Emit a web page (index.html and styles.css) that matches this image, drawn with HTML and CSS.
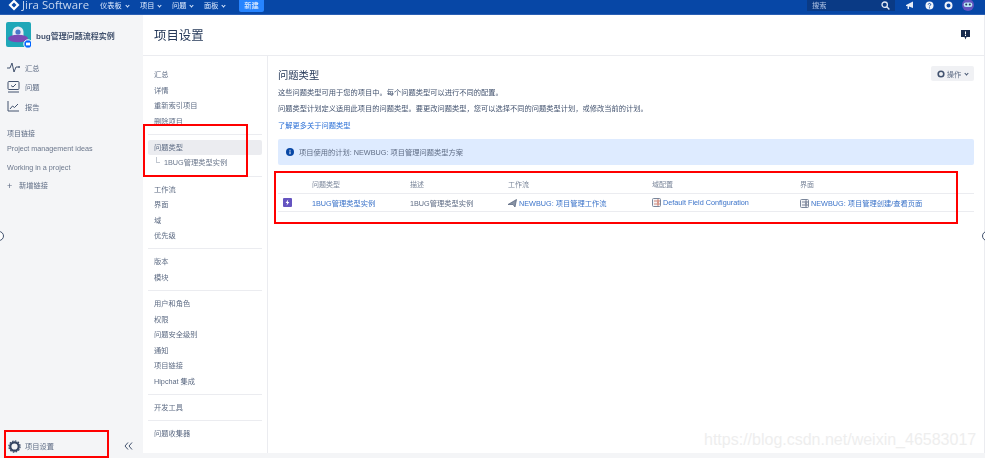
FILE: index.html
```html
<!DOCTYPE html>
<html lang="zh">
<head>
  <meta charset="UTF-8">
  <meta name="viewport" content="width=device-width, initial-scale=1.0">
  <title>项目设置</title>
  <link rel="stylesheet" href="styles.css">
</head>
<body>
  <header class="topbar">
    <div class="logo">
      <svg width="12" height="12" viewBox="0 0 12 12"><path d="M6 .5 11.5 6 6 11.5 .5 6Z" fill="#fff"/><path d="M6 3.5 8.5 6 6 8.5 3.5 6Z" fill="#0747a6"/></svg>
      <span>Jira Software</span>
    </div>
    <nav class="topnav">
      <a class="topitem">仪表板 <i class="caret"></i></a>
      <a class="topitem">项目 <i class="caret"></i></a>
      <a class="topitem">问题 <i class="caret"></i></a>
      <a class="topitem">面板 <i class="caret"></i></a>
      <a class="create">新建</a>
    </nav>
    <div class="topright">
      <div class="search">
        <span>搜索</span>
        <svg width="9" height="9" viewBox="0 0 9 9"><circle cx="3.7" cy="3.7" r="2.7" fill="none" stroke="#dfe7f5" stroke-width="1.3"/><path d="M5.8 5.8 8.4 8.4" stroke="#dfe7f5" stroke-width="1.4"/></svg>
      </div>
      <svg class="ticon" width="9" height="9" viewBox="0 0 9 9"><path d="M0 4 7 .5V7L3 5.6 3 8H1.6V5.2L0 5Z" fill="#e6ecf7"/></svg>
      <svg class="ticon" width="9" height="9" viewBox="0 0 9 9"><circle cx="4.5" cy="4.5" r="4" fill="#f0f4fb"/><path d="M3.2 3.5C3.4 2 5.8 2.2 5.7 3.6 5.6 4.5 4.5 4.4 4.5 5.4" fill="none" stroke="#0747a6"/><circle cx="4.5" cy="6.8" r=".6" fill="#0747a6"/></svg>
      <svg class="ticon" width="9" height="9" viewBox="0 0 9 9"><circle cx="4.5" cy="4.5" r="3" fill="none" stroke="#f0f4fb" stroke-width="2"/></svg>
      <svg class="ticon" width="12" height="12" viewBox="0 0 12 12"><circle cx="6" cy="6" r="6" fill="#6554c0"/><rect x="1.6" y="3.4" width="8.8" height="4.6" rx="2.3" fill="#b9e6f5"/><circle cx="4.2" cy="5.6" r="1" fill="#253858"/><circle cx="7.8" cy="5.6" r="1" fill="#253858"/></svg>
    </div>
  </header>

  <div class="page">
    <aside class="sidebar">
      <div class="project">
        <div class="avatar">
          <svg width="25" height="26" viewBox="0 0 25 26">
            <rect width="25" height="25" rx="2" fill="#1fa7b8"/>
            <path d="M6.5 15V10a5.5 5.5 0 0 1 11 0v5Z" fill="#e6ebf4"/>
            <ellipse cx="12" cy="16.5" rx="10" ry="3.8" fill="#7a4bb5"/>
            <circle cx="12" cy="10" r="2.6" fill="#4a77c9"/>
            <circle cx="22" cy="22" r="4.2" fill="#0065ff" stroke="#fff"/>
            <rect x="20" y="20.6" width="4" height="2.8" fill="#fff"/>
          </svg>
        </div>
        <div class="project-name">bug管理问题流程实例</div>
      </div>
      <ul class="mainnav">
        <li><svg width="13" height="11" viewBox="0 0 13 11"><path d="M0 6H3L5 1 7 10 9 5H11" fill="none" stroke="#42526e" stroke-width="1"/><circle cx="12" cy="5" r="1" fill="#42526e"/></svg>汇总</li>
        <li><svg width="13" height="12" viewBox="0 0 13 12"><rect x="1" y=".5" width="11" height="8" rx="1" fill="none" stroke="#42526e"/><path d="M4 4.5 6 6 9 3" fill="none" stroke="#42526e"/><path d="M1 11H12" stroke="#42526e"/></svg>问题</li>
        <li><svg width="13" height="11" viewBox="0 0 13 11"><path d="M1 0V10H12" fill="none" stroke="#42526e"/><path d="M3 8 5.5 5 7.5 6.5 11 3" fill="none" stroke="#42526e"/></svg>报告</li>
      </ul>
      <h4 class="side-heading">项目链接</h4>
      <a class="side-link">Project management ideas</a>
      <a class="side-link">Working in a project</a>
      <a class="side-add"><span class="plus">+</span>新增链接</a>
      <div class="side-foot">
        <div class="side-settings">
          <svg width="13" height="13" viewBox="0 0 13 13"><circle cx="6.5" cy="6.5" r="4.2" fill="none" stroke="#344563" stroke-width="2.2"/><circle cx="6.5" cy="6.5" r="5.6" fill="none" stroke="#344563" stroke-width="1.2" stroke-dasharray="1.6 1.3"/></svg>
          项目设置
        </div>
        <svg width="9" height="8" viewBox="0 0 9 8"><path d="M4 .5 1 4 4 7.5M8 .5 5 4 8 7.5" fill="none" stroke="#42526e" stroke-width="1"/></svg>
      </div>
    </aside>

    <main class="main">
      <div class="pagehead">
        <h1>项目设置</h1>
        <svg width="9" height="10" viewBox="0 0 9 10"><path d="M0 0H9V7H5.5L4.5 9.5 3.5 7H0Z" fill="#172b4d"/><rect x="4" y="1.4" width="1" height="3" fill="#fff"/><rect x="4" y="5" width="1" height="1" fill="#fff"/></svg>
      </div>
      <div class="body">
        <nav class="settings">
          <ul class="group">
            <li>汇总</li>
            <li>详情</li>
            <li>重新索引项目</li>
            <li>删除项目</li>
          </ul>
          <ul class="group">
            <li class="selected">问题类型</li>
            <li class="sub">1BUG管理类型实例</li>
          </ul>
          <ul class="group">
            <li>工作流</li>
            <li>界面</li>
            <li>域</li>
            <li>优先级</li>
          </ul>
          <ul class="group">
            <li>版本</li>
            <li>模块</li>
          </ul>
          <ul class="group">
            <li>用户和角色</li>
            <li>权限</li>
            <li>问题安全级别</li>
            <li>通知</li>
            <li>项目链接</li>
            <li>Hipchat 集成</li>
          </ul>
          <ul class="group">
            <li>开发工具</li>
          </ul>
          <ul class="group">
            <li>问题收集器</li>
          </ul>
        </nav>

        <section class="content">
          <div class="content-head">
            <h2>问题类型</h2>
            <button class="actions">
              <svg width="8" height="8" viewBox="0 0 8 8"><circle cx="4" cy="4" r="2.8" fill="none" stroke="#42526e" stroke-width="1.6"/></svg>
              操作 <i class="caret dark"></i>
            </button>
          </div>
          <p class="line">这些问题类型可用于您的项目中。每个问题类型可以进行不同的配置。</p>
          <p class="line">问题类型计划定义适用此项目的问题类型。要更改问题类型，您可以选择不同的问题类型计划，或修改当前的计划。</p>
          <a class="more">了解更多关于问题类型</a>
          <div class="notice">
            <svg width="8" height="8" viewBox="0 0 8 8"><circle cx="4" cy="4" r="4" fill="#0747a6"/><rect x="3.5" y="3.4" width="1" height="2.8" fill="#fff"/><rect x="3.5" y="1.8" width="1" height="1" fill="#fff"/></svg>
            项目使用的计划: NEWBUG: 项目管理问题类型方案
          </div>
          <table class="types">
            <colgroup>
              <col class="c-icon"><col class="c-type"><col class="c-desc"><col class="c-flow"><col class="c-field"><col>
            </colgroup>
            <thead>
              <tr><th></th><th>问题类型</th><th>描述</th><th>工作流</th><th>域配置</th><th>界面</th></tr>
            </thead>
            <tbody>
              <tr>
                <td><svg class="ticon-type" width="9" height="9" viewBox="0 0 9 9"><rect width="9" height="9" rx="1" fill="#6554c0"/><path d="M5.2 1.5 2.6 5H4.2L3.6 7.5 6.4 4H4.8Z" fill="#fff"/></svg></td>
                <td><a>1BUG管理类型实例</a></td>
                <td>1BUG管理类型实例</td>
                <td><svg width="9" height="9" viewBox="0 0 9 9"><path d="M0 5.5 8.5 .5 7 8 5 5.5Z" fill="#8993a4" stroke="#505f79" stroke-width=".7"/></svg> <a>NEWBUG: 项目管理工作流</a></td>
                <td><svg width="9" height="9" viewBox="0 0 9 9"><rect x=".5" y=".5" width="8" height="8" rx="1" fill="#f4f5f7" stroke="#7a869a"/><path d="M2 3H4M2 6H4M5 2H7V4H5ZM5 5H7V7H5Z" fill="none" stroke="#c0563f" stroke-width=".7"/></svg> <a>Default Field Configuration</a></td>
                <td><svg width="9" height="9" viewBox="0 0 9 9"><rect x=".5" y=".5" width="8" height="8" rx="1" fill="#f4f5f7" stroke="#7a869a"/><path d="M2 3H4M2 6H4M5 2H7V4H5ZM5 5H7V7H5Z" fill="none" stroke="#42526e" stroke-width=".7"/></svg> <a>NEWBUG: 项目管理创建/查看页面</a></td>
              </tr>
            </tbody>
          </table>
        </section>
      </div>
    </main>
  </div>

  <span class="pager pager-left"></span>
  <span class="pager pager-right"></span>
  <span class="mark mark-types"></span>
  <span class="mark mark-table"></span>
  <span class="mark mark-settings"></span>
  <span class="watermark">https://blog.csdn.net/weixin_46583017</span>
</body>
</html>
```

FILE: styles.css
```css
* {
  margin: 0;
  padding: 0;
  box-sizing: border-box;
}

html, body {
  height: 458px;
  overflow: hidden;
}

body {
  font-family: "Liberation Sans", "Noto Sans CJK SC", sans-serif;
  font-size: 7.25px;
  color: #5e6c84;
  background: #fff;
  display: flex;
  flex-direction: column;
}

ul {
  list-style: none;
}

/* the screenshot is a soft upscale, so the page gets a slight blur too */
.topbar,
.page {
  filter: blur(0.3px);
}

.topbar {
  height: 15px;
  flex: none;
  background: #0747a6;
  border-bottom: 1px solid #2a5fb4;
  padding-bottom: 4px;
  display: flex;
  align-items: center;
  color: #deebff;
}

.logo {
  display: flex;
  align-items: center;
  gap: 2px;
  margin-left: 8px;
  width: 92px;
  font-family: "Open Sans", sans-serif;
  font-size: 11.4px;
  line-height: 10px;
  color: #c9d8f0;
  white-space: nowrap;
}

.topnav {
  display: flex;
  align-items: center;
  height: 10px;
}

.topitem {
  width: 32px;
  white-space: nowrap;
  font-size: 7.2px;
}

.topitem:first-child {
  width: 40px;
}

.caret {
  display: inline-block;
  width: 3px;
  height: 3px;
  margin: 0 0 1px 2px;
  border-right: 1px solid #deebff;
  border-bottom: 1px solid #deebff;
  transform: rotate(45deg);
}

.caret.dark {
  border-color: #42526e;
}

.create {
  margin-left: 3px;
  width: 25px;
  height: 12px;
  margin-top: 2px;
  background: #2684ff;
  border-radius: 0 0 2px 2px;
  color: #fff;
  text-align: center;
  line-height: 12px;
}

.topright {
  margin-left: auto;
  display: flex;
  align-items: center;
  height: 10px;
  padding-right: 11px;
}

.search {
  width: 88px;
  height: 12px;
  margin: 0 11px 0 0;
  padding: 0 5px;
  background: #0a3a85;
  display: flex;
  align-items: center;
  justify-content: space-between;
  color: #b3c6e6;
  flex: none;
}

.ticon {
  margin-right: 10px;
}

.ticon:last-child {
  margin: 0 0 0 -1px;
}

.page {
  flex: 1;
  display: flex;
  min-height: 0;
  background: #f4f5f7;
}

.sidebar {
  width: 143px;
  flex: none;
  background: #f4f5f7;
  display: flex;
  flex-direction: column;
  padding-top: 7px;
}

.project {
  display: flex;
  align-items: center;
  gap: 5px;
  padding-left: 6px;
}

.avatar {
  height: 26px;
}

.project-name {
  font-size: 8px;
  font-weight: bold;
  color: #42526e;
  white-space: nowrap;
}

.mainnav {
  margin-top: 10px;
}

.mainnav li {
  height: 19.5px;
  display: flex;
  align-items: center;
  gap: 5px;
  padding-left: 7px;
}

.side-heading {
  margin-top: 11px;
  padding-left: 7px;
  font-size: 7px;
  font-weight: normal;
  line-height: 12px;
}

.side-link {
  display: block;
  padding-left: 7px;
  margin-top: 7px;
  line-height: 12px;
  font-size: 7.2px;
  color: #6b778c;
}

.side-heading + .side-link {
  margin-top: 3px;
}

.side-add {
  display: flex;
  align-items: center;
  margin-top: 6px;
  padding-left: 7px;
  line-height: 12px;
}

.plus {
  width: 12px;
  font-size: 9px;
}

.side-foot {
  margin-top: auto;
  height: 24px;
  display: flex;
  align-items: center;
  justify-content: space-between;
  padding: 0 10px 0 8px;
}

.side-settings {
  display: flex;
  align-items: center;
  gap: 4px;
}

.main {
  flex: 1;
  min-width: 0;
  margin-bottom: 5px;
  border-right: 1px solid #ebecf0;
  display: flex;
  flex-direction: column;
  background: #fff;
}

.pagehead {
  height: 41px;
  flex: none;
  border-bottom: 1px solid #ebecf0;
  display: flex;
  align-items: center;
  justify-content: space-between;
  padding: 0 14px 0 11px;
}

.pagehead h1 {
  font-size: 12.4px;
  font-weight: normal;
  color: #253858;
}

.body {
  flex: 1;
  display: flex;
  min-height: 0;
}

.settings {
  width: 125px;
  flex: none;
  border-right: 1px solid #ebecf0;
  padding: 11px 5px 0;
}

.group {
  border-top: 1px solid #ebecf0;
  padding: 5px 0 4.8px;
}

.group:first-child {
  border-top: none;
  padding-top: 0;
}

.group li {
  height: 15.5px;
  line-height: 15.5px;
  padding-left: 6px;
  white-space: nowrap;
}

.group .selected {
  background: #ebecf0;
  border-radius: 2px;
}

.group .sub {
  position: relative;
  padding-left: 16px;
  color: #6b778c;
}

.group .sub::before {
  content: "";
  position: absolute;
  left: 8px;
  top: 2px;
  width: 3px;
  height: 5px;
  border-left: 1px solid #c1c7d0;
  border-bottom: 1px solid #c1c7d0;
}

.content {
  flex: 1;
  min-width: 0;
  padding: 10px 10px 0;
}

.content-head {
  display: flex;
  align-items: flex-start;
  justify-content: space-between;
  height: 17px;
}

.content-head h2 {
  font-size: 10.3px;
  font-weight: normal;
  color: #253858;
  line-height: 19px;
}

.actions {
  width: 43px;
  height: 15px;
  border: none;
  border-radius: 2px;
  background: #f0f1f4;
  color: #5e6c84;
  font: inherit;
  display: flex;
  align-items: center;
  justify-content: center;
  gap: 2px;
}

.line {
  margin-top: 4px;
  line-height: 12px;
  color: #42526e;
  white-space: nowrap;
}

.more {
  display: block;
  margin-top: 5px;
  line-height: 12px;
  color: #2a6fd6;
}

.notice {
  margin-top: 7px;
  height: 26px;
  background: #deebff;
  border-radius: 2px;
  padding-left: 8px;
  display: flex;
  align-items: center;
  gap: 5px;
  color: #5e6c84;
}

.types {
  width: 696px;
  margin-top: 14px;
  border-collapse: collapse;
  table-layout: fixed;
}

.c-icon { width: 34px; }
.c-type { width: 98px; }
.c-desc { width: 98px; }
.c-flow { width: 144px; }
.c-field { width: 148px; }

.types th {
  height: 14px;
  text-align: left;
  font-weight: normal;
  color: #7a869a;
  font-size: 7px;
  border-bottom: 1px solid #ebecf0;
  padding-bottom: 4px;
}

.types td {
  height: 18px;
  border-bottom: 1px solid #ebecf0;
  white-space: nowrap;
  color: #5e6c84;
}

.types td svg {
  vertical-align: -2px;
}

.types td .ticon-type {
  margin-left: 5px;
}

.types a {
  color: #3b73c9;
}

.pager {
  position: absolute;
  top: 231px;
  width: 10px;
  height: 10px;
  border: 1px solid #42526e;
  border-radius: 50%;
  background: #fff;
}

.pager-left {
  left: -6px;
}

.pager-right {
  left: 982px;
}

.mark {
  position: absolute;
  border: 2.5px solid #f00;
}

.mark-types {
  left: 143px;
  top: 124px;
  width: 105px;
  height: 53px;
}

.mark-table {
  left: 274px;
  top: 171px;
  width: 684px;
  height: 53px;
}

.mark-settings {
  left: 4px;
  top: 430px;
  width: 105px;
  height: 28px;
}

.watermark {
  position: absolute;
  left: 704px;
  top: 431px;
  font-size: 16px;
  line-height: 18px;
  color: #eee;
  white-space: nowrap;
}
```
